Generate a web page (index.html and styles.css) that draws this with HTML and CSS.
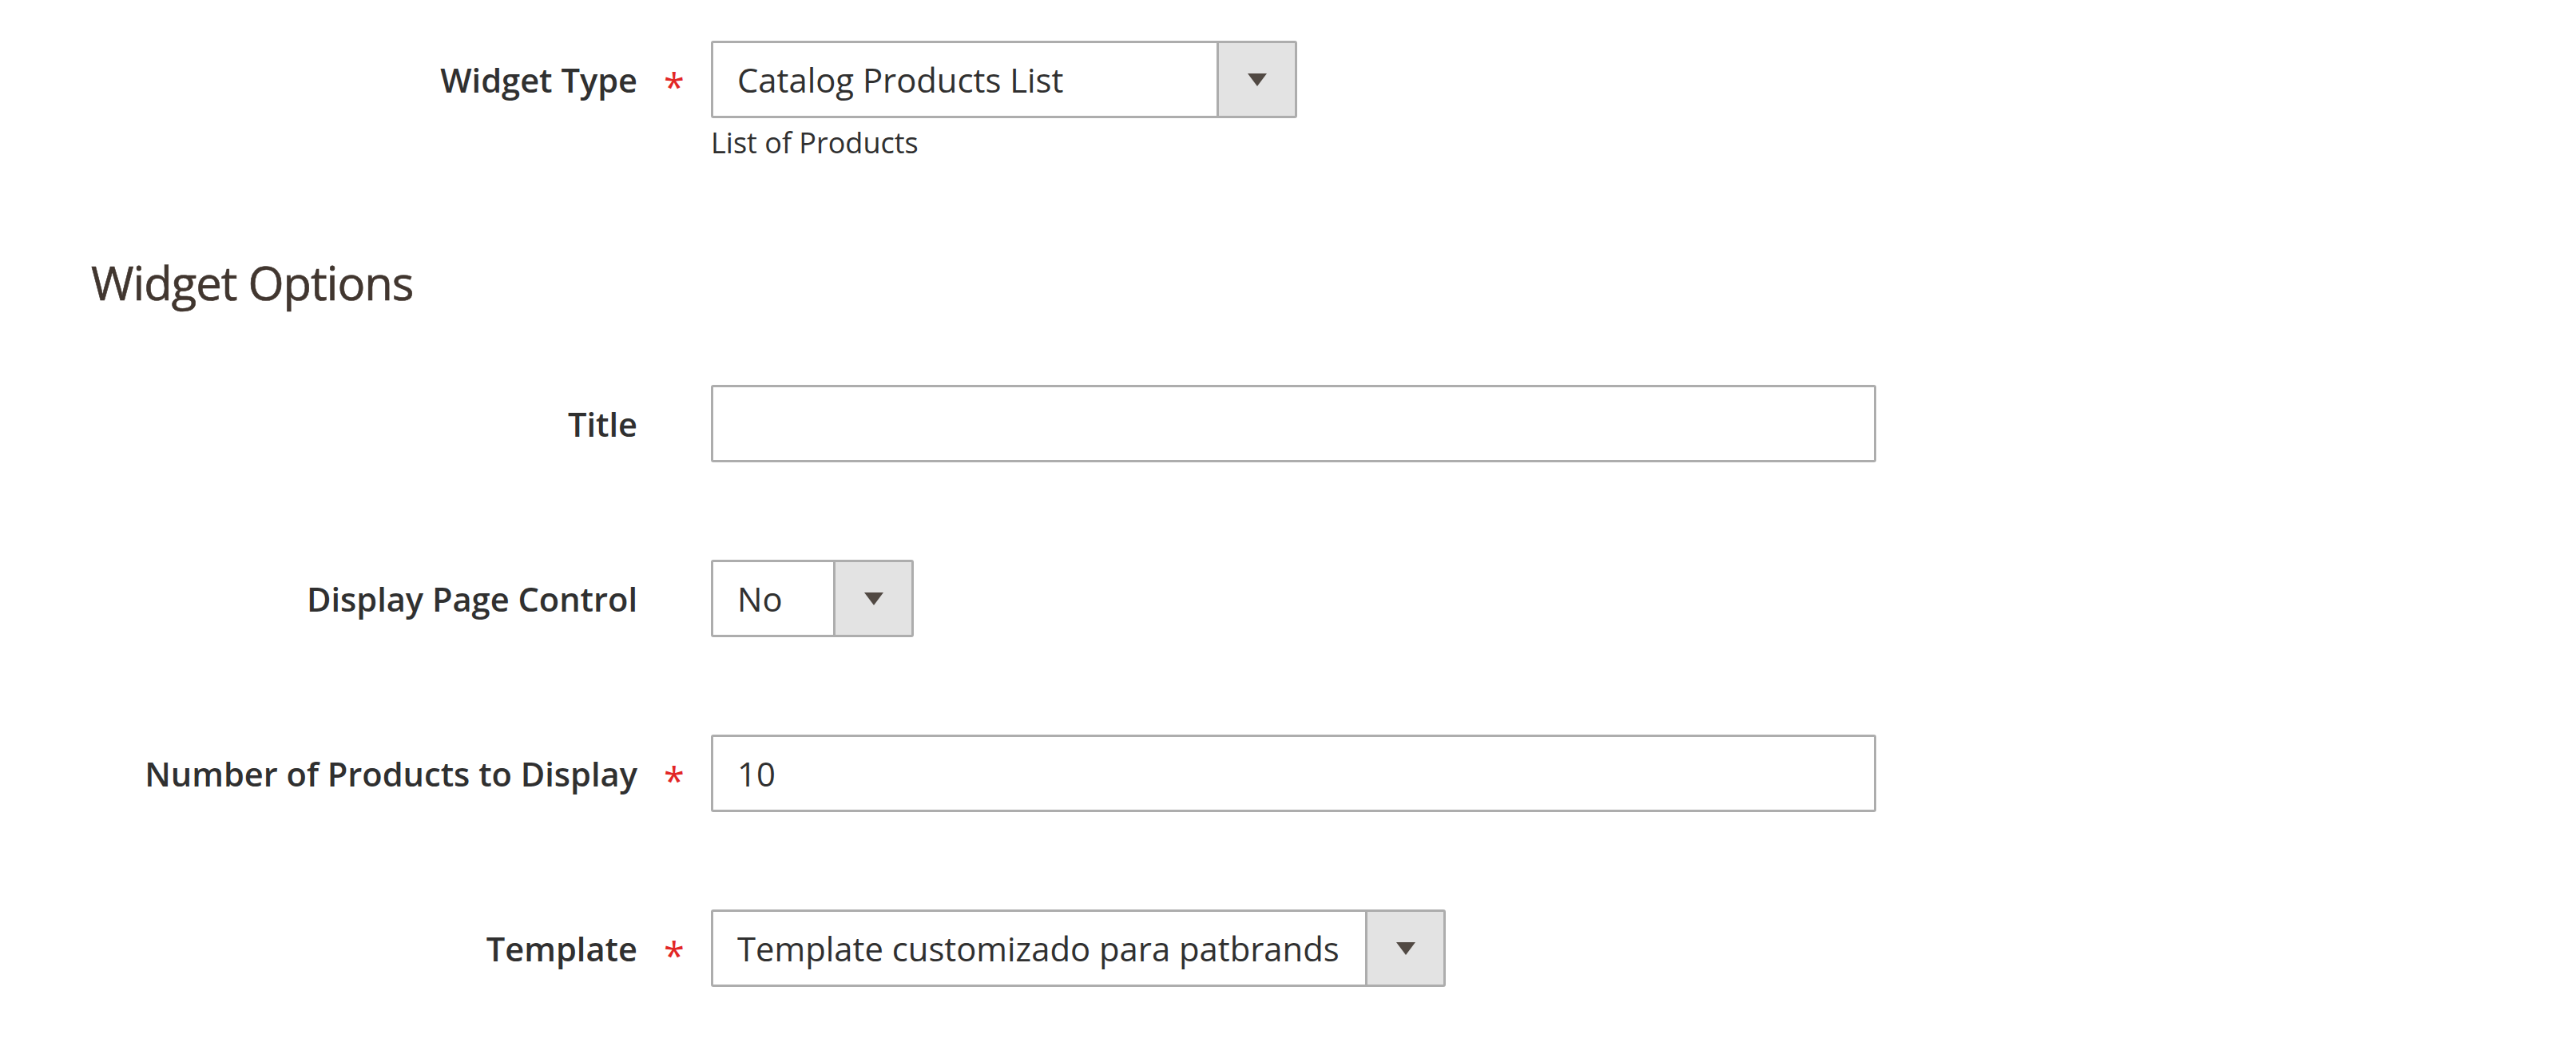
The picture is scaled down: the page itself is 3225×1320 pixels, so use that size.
FILE: index.html
```html
<!DOCTYPE html>
<html lang="en">
<head>
<meta charset="utf-8">
<title>Widget</title>
<link rel="stylesheet" href="styles.css">
</head>
<body>
<div class="form">
  <div class="field">
    <div class="label">Widget Type</div>
    <div class="req">*</div>
    <div class="control">
      <div class="select w-type"><span class="value">Catalog Products List</span><span class="arrow"></span></div>
      <div class="note">List of Products</div>
    </div>
  </div>

  <h2 class="legend">Widget Options</h2>

  <div class="fields">
    <div class="field">
      <div class="label">Title</div>
      <div class="req"></div>
      <div class="control">
        <div class="input"></div>
      </div>
    </div>
    <div class="field">
      <div class="label">Display Page Control</div>
      <div class="req"></div>
      <div class="control">
        <div class="select w-page"><span class="value">No</span><span class="arrow"></span></div>
      </div>
    </div>
    <div class="field">
      <div class="label">Number of Products to Display</div>
      <div class="req">*</div>
      <div class="control">
        <div class="input"><span class="value">10</span></div>
      </div>
    </div>
    <div class="field">
      <div class="label">Template</div>
      <div class="req">*</div>
      <div class="control">
        <div class="select w-template"><span class="value">Template customizado para patbrands</span><span class="arrow"></span></div>
      </div>
    </div>
  </div>
</div>
</body>
</html>
```

FILE: styles.css
```css
html, body {
  margin: 0;
  padding: 0;
  background: #ffffff;
}
body {
  font-family: "Open Sans", "Liberation Sans", sans-serif;
  color: #303030;
}
.form {
  padding-top: 51px;
}
.field {
  display: flex;
  align-items: flex-start;
}
.fields .field + .field {
  margin-top: 122px;
}
.label {
  width: 798px;
  height: 97px;
  flex: none;
  display: flex;
  align-items: center;
  justify-content: flex-end;
  font-size: 41.6px;
  font-weight: 600;
  color: #303030;
  white-space: nowrap;
}
.req {
  width: 92px;
  height: 97px;
  flex: none;
  box-sizing: border-box;
  padding-top: 18px;
  display: flex;
  align-items: center;
  justify-content: center;
  color: #e22626;
  font-size: 47px;
  line-height: 1;
}
.control {
  flex: none;
}
.select,
.input {
  display: flex;
  box-sizing: border-box;
  height: 97px;
  border: 3px solid #adadad;
  border-radius: 3px;
  background: #ffffff;
  font-size: 41.8px;
  color: #303030;
}
.input {
  width: 1459px;
}
.w-type { width: 734px; }
.w-page { width: 254px; }
.w-template { width: 920px; }
.value {
  flex: 1;
  display: flex;
  align-items: center;
  padding-left: 30px;
  white-space: nowrap;
}
.arrow {
  flex: none;
  width: 95px;
  background: #e3e3e3;
  border-left: 3px solid #adadad;
  display: flex;
  align-items: center;
  justify-content: center;
}
.arrow::after {
  content: "";
  display: block;
  width: 0;
  height: 0;
  border-style: solid;
  border-width: 16px 12px 0 12px;
  border-color: #514943 transparent transparent transparent;
}
.note {
  margin-top: 6px;
  font-size: 36px;
  line-height: 50px;
  color: #303030;
}
.legend {
  margin: 114px 0 92px 0;
  padding-left: 114px;
  font-size: 58px;
  line-height: 72px;
  font-weight: 400;
  letter-spacing: -1px;
  color: #41362f;
  -webkit-text-stroke: 0.6px #41362f;
}
```
